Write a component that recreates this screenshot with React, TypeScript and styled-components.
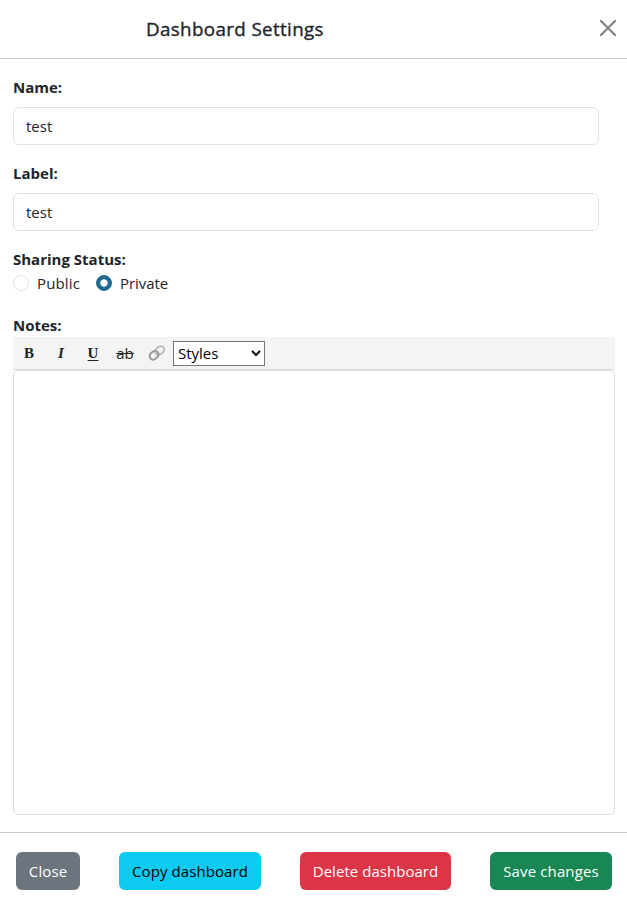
import React from "react";
import styled, { createGlobalStyle } from "styled-components";

const GlobalStyle = createGlobalStyle`
  * { box-sizing: border-box; }
  body {
    margin: 0;
    background: #fff;
    color: #212529;
    font: 15px/24px "Open Sans", "Noto Sans", sans-serif;
  }
`;

const Modal = styled.div`
  display: flex;
  flex-direction: column;
  width: 627px;
  height: 902px;
  background: #fff;
  overflow: hidden;
`;

const Header = styled.header`
  display: flex;
  align-items: center;
  justify-content: space-between;
  flex: none;
  height: 59px;
  padding: 0 11px 2px 146px;
  border-bottom: 1px solid #c9c9c9;
`;

const Title = styled.h4`
  margin: 0;
  padding-top: 1px;
  font-size: 18.8px;
  font-weight: 500;
  line-height: 30px;
  letter-spacing: 0.36px;
  -webkit-text-stroke: 0.35px currentColor;
  white-space: nowrap;
`;

const CloseIconButton = styled.button`
  display: flex;
  padding: 0;
  border: 0;
  background: none;
  color: #7f7f7f;
`;

const Body = styled.main`
  display: flex;
  flex-direction: column;
  flex: 1;
  padding: 16px 12px 17px 13px;
`;

const Field = styled.div`
  display: flex;
  flex-direction: column;
  gap: 8px;
  margin-bottom: 16px;
`;

const Label = styled.label`
  height: 24px;
  font-weight: 700;
`;

const TextInput = styled.input`
  width: 586px;
  height: 38px;
  padding: 6px 12px;
  border: 1px solid #dee2e6;
  border-radius: 6px;
  outline: 0;
  background: #fff;
  color: #212529;
  font: inherit;
`;

const RadioRow = styled.div`
  display: flex;
  gap: 16px;
  height: 24px;
  margin-bottom: 18px;
`;

const RadioLabel = styled.label`
  display: flex;
  align-items: center;
  gap: 8px;
`;

const Radio = styled.input`
  appearance: none;
  width: 16px;
  height: 16px;
  margin: 0;
  border: 1px solid #dee2e6;
  border-radius: 50%;
  background: #fff;

  &:checked {
    border-color: #1f6a90;
    background: radial-gradient(circle, #fff 3.3px, #1f6a90 4.1px);
  }
`;

const RadioText = styled.span<{ $width: number; $tracking?: number }>`
  width: ${(p) => p.$width}px;
  letter-spacing: ${(p) => p.$tracking ?? 0}px;
  white-space: nowrap;
`;

const Toolbar = styled.div`
  display: flex;
  align-items: center;
  flex: none;
  height: 33px;
  border-bottom: 1px solid #dcdcdc;
  background: #f4f4f4;
`;

const Tool = styled.button<{ $variant?: "bold" | "italic" | "underline" | "strike" }>`
  display: flex;
  align-items: center;
  justify-content: center;
  width: 32px;
  height: 32px;
  padding: 0;
  border: 0;
  background: none;
  color: #212529;
  font: ${(p) =>
    p.$variant === "strike"
      ? '15px "Open Sans", sans-serif'
      : `${p.$variant === "italic" ? "italic " : ""}bold 15px "Liberation Serif", serif`};
  text-decoration: ${(p) =>
    p.$variant === "underline" ? "underline" : p.$variant === "strike" ? "line-through" : "none"};
  text-underline-offset: 2px;
`;

const StyleSelect = styled.select`
  width: 92px;
  height: 25px;
  padding: 0;
  border: 1px solid #767676;
  border-radius: 0;
  background: #fff;
  color: #000;
  font: 15px "Open Sans", sans-serif;
`;

const Notes = styled.textarea`
  flex: 1;
  width: 602px;
  padding: 8px 12px;
  border: 1px solid #dcdcdc;
  border-radius: 6px;
  outline: 0;
  resize: none;
  font: inherit;
`;

const Footer = styled.footer`
  display: flex;
  align-items: flex-start;
  justify-content: space-between;
  flex: none;
  height: 70px;
  padding: 19px 15px 0 16px;
  border-top: 1px solid #c9c9c9;
`;

const Button = styled.button<{ $bg: string; $color?: string; $width: number; $tracking?: number }>`
  width: ${(p) => p.$width}px;
  height: 38px;
  padding: 0;
  border: 0;
  border-radius: 6px;
  background: ${(p) => p.$bg};
  color: ${(p) => p.$color ?? "#fff"};
  font: inherit;
  letter-spacing: ${(p) => p.$tracking ?? 0}px;
  white-space: nowrap;
`;

const LinkIcon = () => (
  <svg width="18" height="18" viewBox="0 0 18 18" fill="none" strokeWidth="2">
    <rect x="6.9" y="3" width="9.6" height="7" rx="3.5" stroke="#bdbdbd" transform="rotate(-42 11.7 6.5)" />
    <rect x="1.3" y="7.8" width="9.6" height="7" rx="3.5" stroke="#9c9c9c" transform="rotate(-42 6.1 11.3)" />
  </svg>
);

export default function App() {
  return (
    <>
      <GlobalStyle />
      <Modal>
        <Header>
          <Title>Dashboard Settings</Title>
          <CloseIconButton aria-label="Close">
            <svg width="16" height="16" viewBox="0 0 16 16" stroke="currentColor" strokeWidth="2" strokeLinecap="round">
              <path d="M1 1 15 15M15 1 1 15" />
            </svg>
          </CloseIconButton>
        </Header>
        <Body>
          <Field>
            <Label htmlFor="name">Name:</Label>
            <TextInput id="name" defaultValue="test" />
          </Field>
          <Field>
            <Label htmlFor="label">Label:</Label>
            <TextInput id="label" defaultValue="test" />
          </Field>
          <Label as="div">Sharing Status:</Label>
          <RadioRow>
            <RadioLabel>
              <Radio type="radio" name="sharing" />
              <RadioText $width={43} $tracking={0.15}>Public</RadioText>
            </RadioLabel>
            <RadioLabel>
              <Radio type="radio" name="sharing" defaultChecked />
              <RadioText $width={49} $tracking={-0.05}>Private</RadioText>
            </RadioLabel>
          </RadioRow>
          <Label htmlFor="notes">Notes:</Label>
          <Toolbar>
            <Tool $variant="bold">B</Tool>
            <Tool $variant="italic">I</Tool>
            <Tool $variant="underline">U</Tool>
            <Tool $variant="strike">ab</Tool>
            <Tool aria-label="Link"><LinkIcon /></Tool>
            <StyleSelect defaultValue="Styles">
              <option>Styles</option>
            </StyleSelect>
          </Toolbar>
          <Notes id="notes" />
        </Body>
        <Footer>
          <Button $bg="#6c757d" $width={64} $tracking={0.1}>Close</Button>
          <Button $bg="#0dcaf0" $color="#000" $width={142} $tracking={0.08}>Copy dashboard</Button>
          <Button $bg="#dc3545" $width={151} $tracking={0.04}>Delete dashboard</Button>
          <Button $bg="#198754" $width={122} $tracking={0.14}>Save changes</Button>
        </Footer>
      </Modal>
    </>
  );
}
